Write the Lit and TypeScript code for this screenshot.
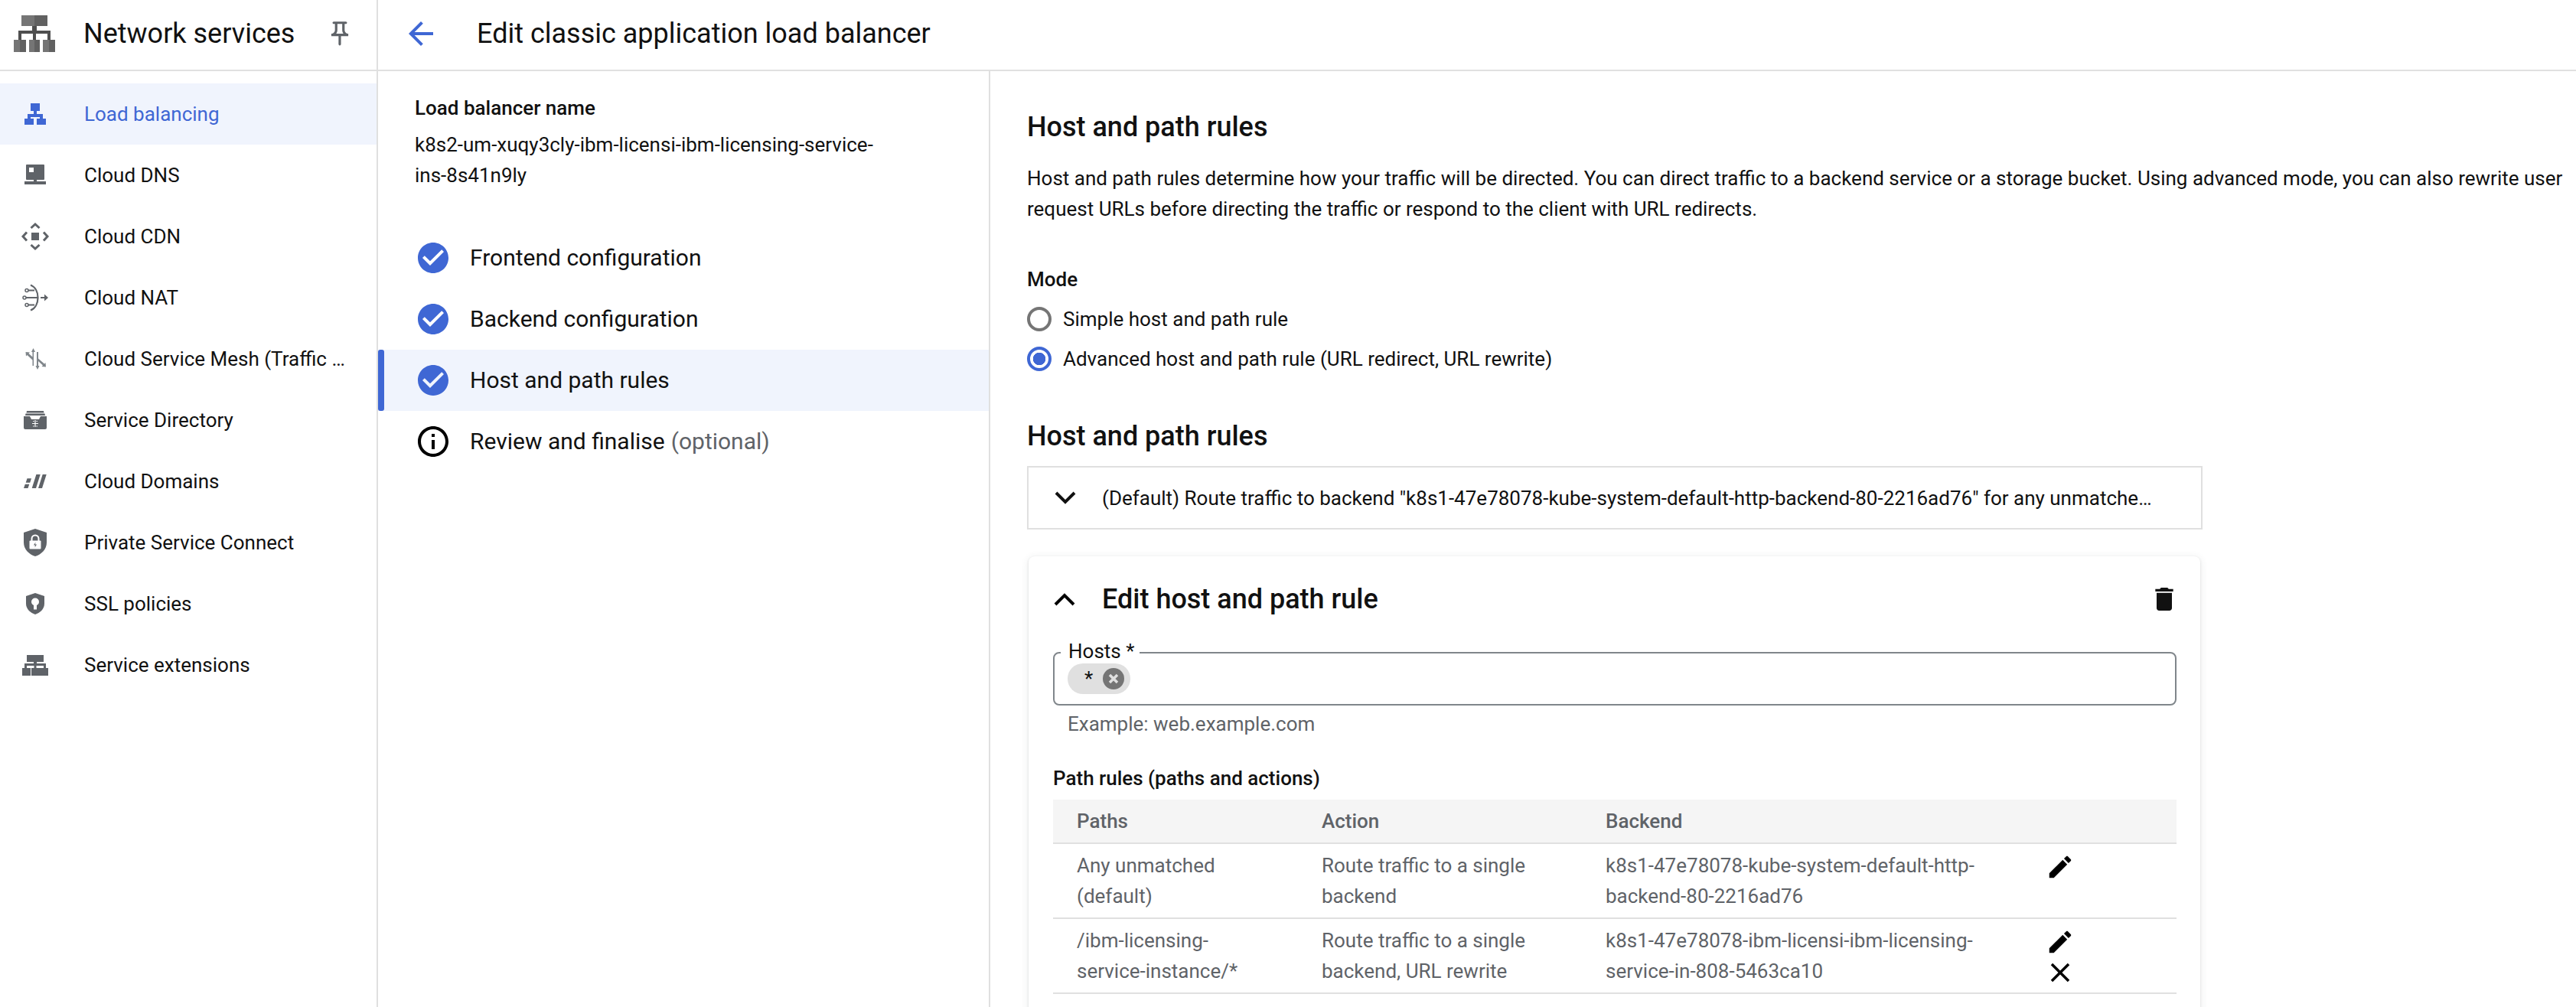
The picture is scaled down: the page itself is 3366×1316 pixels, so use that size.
import { LitElement, html, css, svg } from "lit";
import { customElement } from "lit/decorators.js";

const navIcons = {
  lb: svg`<path d="M18 10h12v10h-4v4h8v6h4v8H26v-8h4v-2H18v2h4v8H10v-8h4v-6h8v-4h-4z"/>`,
  dns: svg`<path fill-rule="evenodd" d="M13 10h22a1 1 0 0 1 1 1v18a1 1 0 0 1-1 1H26v2h12v4H10v-4h12v-2h-9a1 1 0 0 1-1-1V11a1 1 0 0 1 1-1zm3 4v6h6v-6z"/>`,
  cdn: svg`<rect x="19" y="19" width="10" height="10"/><path d="M18.500 13 24 8l5.500 5M18.500 35 24 40l5.500-5M13 18.500 8 24l5 5.500M35 18.500 40 24l-5 5.500" fill="none" stroke="currentColor" stroke-width="3"/>`,
  nat: svg`<path d="M18 7.500c6 2.500 9.500 9 9.500 16.500s-3.500 14-9.500 16.500" fill="none" stroke="currentColor" stroke-width="2.200"/><path d="M15 14.500h8M12 24h15M15 33.500h8" stroke="currentColor" stroke-width="1.800"/><circle cx="13" cy="14.500" r="2" fill="none" stroke="currentColor" stroke-width="1.500"/><circle cx="10" cy="24" r="2" fill="none" stroke="currentColor" stroke-width="1.500"/><circle cx="13" cy="33.500" r="2" fill="none" stroke="currentColor" stroke-width="1.500"/><path d="M31 23h5v-3.500l5 4.500-5 4.500V25h-5z"/>`,
  mesh: svg`<g fill="#80868b"><path d="M20.500 15H19l2.500-5 2.500 5h-2v18h-1.500v-7.500L13.500 19l-1.500 1.500-.5-5.500 5.500.5-1.500 1.500 5 4.500z"/><path d="M26 33h-1.500l2.500 5 2.500-5h-1.500V27l6 5.500-1.500 1.500 5.500.5-.5-5.500-1.500 1.500-8-7V15H26z"/></g>`,
  dir: svg`<path d="M13 12h22l.5 2.500h-23zM11.500 15.500h25l.5 2.500H11zM9 19h8l2 4h10l2-4h8v15a2 2 0 0 1-2 2H11a2 2 0 0 1-2-2z"/><path d="M24 24v9M20 28.500h8M21 25.500h1.500M25.500 25.500H27M21 32h1.500M25.500 32H27" stroke="#fff" stroke-width="1.200" fill="none"/>`,
  domains: svg`<path d="M9 33h5.500l1.800-5.300h-5.500zM11.700 25.700h5.500l1.800-5.500h-5.500zM19.700 33H25l5.700-18h-5.300zM28 33h5l5.700-18h-5z"/>`,
  psc: svg`<path d="M24 6l15 5v13c0 9-7 15.500-15 18-8-2.500-15-9-15-18V11z"/><path d="M19.500 22v-3a4.500 4.500 0 0 1 9 0v3" fill="none" stroke="#fff" stroke-width="2"/><rect x="16.500" y="21.500" width="15" height="11" rx="1" fill="#fff"/><path d="M24.500 23.500l-2.500 4h2l-.5 3 2.500-4h-2z"/>`,
  ssl: svg`<path d="M24 10l12 4v10c0 7-6 12-12 14-6-2-12-7-12-14V14z"/><circle cx="24" cy="21.500" r="5" fill="#fff"/><rect x="22" y="23" width="4" height="8.500" fill="#fff"/>`,
  ext: svg`<path d="M13 11h22v9h-9v2h12v6h3v10H30V28h5v-3H25.500v3h4.500v10H19V28h3.500v-3H13v3h5v10H7V28h3v-6h12v-2h-9z"/>`,
};

const NAV: { label: string; icon: keyof typeof navIcons; active?: boolean }[] = [
  { label: "Load balancing", icon: "lb", active: true },
  { label: "Cloud DNS", icon: "dns" },
  { label: "Cloud CDN", icon: "cdn" },
  { label: "Cloud NAT", icon: "nat" },
  { label: "Cloud Service Mesh (Traffic Director)", icon: "mesh" },
  { label: "Service Directory", icon: "dir" },
  { label: "Cloud Domains", icon: "domains" },
  { label: "Private Service Connect", icon: "psc" },
  { label: "SSL policies", icon: "ssl" },
  { label: "Service extensions", icon: "ext" },
];

const CHECK = "M12 2C6.48 2 2 6.48 2 12s4.48 10 10 10 10-4.48 10-10S17.52 2 12 2zm-2 15l-5-5 1.41-1.410L10 14.170l7.590-7.590L19 8l-9 9z";
const INFO = "M11 7h2v2h-2zm0 4h2v6h-2zm1-9C6.480 2 2 6.480 2 12s4.480 10 10 10 10-4.480 10-10S17.520 2 12 2zm0 18c-4.410 0-8-3.590-8-8s3.590-8 8-8 8 3.590 8 8-3.590 8-8 8z";
const EDIT = "M3 17.250V21h3.750L17.810 9.940l-3.750-3.750L3 17.250zM20.710 7.040c.39-.39.39-1.020 0-1.410l-2.340-2.340c-.39-.39-1.020-.39-1.410 0l-1.830 1.830 3.750 3.750 1.830-1.830z";
const CLOSE = "M19 6.410L17.590 5 12 10.590 6.410 5 5 6.410 10.590 12 5 17.590 6.410 19 12 13.410 17.590 19 19 17.590 13.410 12z";

const STEPS = [
  { label: "Frontend configuration", done: true },
  { label: "Backend configuration", done: true },
  { label: "Host and path rules", done: true, active: true },
  { label: "Review and finalise", optional: true },
];

const RULES = [
  {
    paths: "Any unmatched (default)",
    action: "Route traffic to a single backend",
    backend: "k8s1-47e78078-kube-system-default-http-backend-80-2216ad76",
    removable: false,
  },
  {
    paths: "/ibm-licensing-service-instance/*",
    action: "Route traffic to a single backend, URL rewrite",
    backend: "k8s1-47e78078-ibm-licensi-ibm-licensing-service-in-808-5463ca10",
    removable: true,
  },
];

@customElement("app-root")
export class AppRoot extends LitElement {
  static styles = css`
    :host {
      display: block;
      height: 1316px;
      overflow: hidden;
      background: #fff;
      color: #111;
      font-family: Roboto, sans-serif;
      font-size: 26px;
      line-height: 40px;
    }
    svg {
      display: block;
      flex: none;
      fill: currentColor;
    }
    .shell {
      display: flex;
      height: 100%;
    }

    /* left nav */
    .nav {
      flex: none;
      width: 492px;
      border-right: 2px solid #e0e0e0;
    }
    .nav-head {
      box-sizing: border-box;
      display: flex;
      align-items: center;
      height: 93px;
      padding: 0 29px 4px 18px;
      border-bottom: 2px solid #e0e0e0;
    }
    .nav-head .name {
      margin-left: 37px;
      font-size: 36px;
      flex: 1;
    }
    .pin {
      color: #5f6368;
    }
    .nav-list {
      padding-top: 16px;
    }
    .nav-item {
      display: flex;
      align-items: center;
      height: 80px;
      padding: 0 36px 0 22px;
    }
    .nav-item svg {
      color: #5f6368;
    }
    .nav-item span {
      margin-left: 40px;
      white-space: nowrap;
      overflow: hidden;
      text-overflow: ellipsis;
    }
    .nav-item.active {
      background: #f0f4fd;
      color: #3f67d4;
    }
    .nav-item.active svg {
      color: #3f67d4;
    }

    /* page */
    .page {
      flex: 1;
      min-width: 0;
      display: flex;
      flex-direction: column;
    }
    .top {
      box-sizing: border-box;
      display: flex;
      align-items: center;
      flex: none;
      height: 93px;
      padding: 0 0 4px 32px;
      border-bottom: 2px solid #e0e0e0;
    }
    .top svg {
      color: #3f67d4;
    }
    .top h1 {
      margin: 0 0 0 49px;
      font-size: 36px;
      font-weight: 400;
    }
    .body {
      flex: 1;
      display: flex;
      min-height: 0;
    }

    /* stepper */
    .stepper {
      flex: none;
      width: 798px;
      border-right: 2px solid #e0e0e0;
      padding-top: 28px;
    }
    .lb-name {
      padding: 0 130px 0 48px;
    }
    .lb-name b {
      display: block;
      font-weight: 500;
      margin-bottom: 8px;
    }
    .steps {
      margin-top: 48px;
    }
    .step {
      position: relative;
      display: flex;
      align-items: center;
      height: 80px;
      padding-left: 48px;
      font-size: 30px;
    }
    .step svg {
      color: #3f67d4;
      margin-right: 24px;
    }
    .step.todo svg {
      color: #000;
    }
    .step.active {
      background: #f0f4fd;
    }
    .step.active::before {
      content: "";
      position: absolute;
      left: 0;
      top: 0;
      bottom: 0;
      width: 8px;
      border-radius: 3px;
      background: #3f67d4;
    }
    .optional {
      color: #5f6368;
      margin-left: 8px;
    }

    /* form */
    .form {
      flex: 1;
      min-width: 0;
      padding: 49px 0 0 48px;
    }
    h2 {
      margin: 0;
      font-size: 36px;
      line-height: 48px;
      font-weight: 500;
    }
    .desc {
      margin: 23px 0 0;
    }
    .mode {
      margin-top: 52px;
      font-weight: 500;
    }
    .radios {
      margin: 6px 0 51px;
    }
    .radio {
      display: flex;
      align-items: center;
      height: 52px;
    }
    .dot {
      box-sizing: border-box;
      width: 32px;
      height: 32px;
      margin-right: 15px;
      border: 4px solid #757575;
      border-radius: 50%;
      background: #fff;
    }
    .dot.on {
      border-color: #3f67d4;
      background: radial-gradient(circle, #3f67d4 0 8px, #fff 8.500px);
    }
    .collapsed {
      box-sizing: border-box;
      display: flex;
      align-items: center;
      width: 1536px;
      height: 83px;
      margin-top: 15px;
      padding: 0 61px 0 34px;
      border: 2px solid #e0e0e0;
    }
    .collapsed span {
      margin-left: 34px;
      white-space: nowrap;
      overflow: hidden;
      text-overflow: ellipsis;
    }
    .card {
      box-sizing: border-box;
      width: 1531px;
      margin: 35px 0 0 2px;
      padding: 32px 31px 200px 32px;
      border-radius: 8px;
      box-shadow: 0 1px 3px rgba(60, 64, 67, 0.16), 0 2px 10px 2px rgba(60, 64, 67, 0.07);
    }
    .card-head {
      display: flex;
      align-items: center;
      height: 48px;
      padding-left: 1px;
      margin-right: -4px;
    }
    .card-head h3 {
      flex: 1;
      margin: 0 0 0 35px;
      font-size: 36px;
      line-height: 48px;
      font-weight: 500;
    }
    .field {
      position: relative;
      box-sizing: border-box;
      height: 70px;
      margin-top: 45px;
      padding: 13px 17px 0;
      border: 2px solid #80868b;
      border-radius: 8px;
    }
    .field label {
      position: absolute;
      left: 8px;
      top: -19px;
      padding: 0 7px 0 10px;
      line-height: 32px;
      background: #fff;
    }
    .chip {
      display: inline-flex;
      align-items: center;
      box-sizing: border-box;
      width: 82px;
      height: 40px;
      padding-left: 22px;
      border-radius: 20px;
      background: #e0e0e0;
    }
    .chip svg {
      margin-left: 13px;
    }
    .hint {
      margin: 4px 0 0 19px;
      color: #5f6368;
    }
    .rules-title {
      margin-top: 31px;
      font-weight: 500;
    }
    table {
      width: 100%;
      margin-top: 8px;
      border-collapse: collapse;
      table-layout: fixed;
      color: #5f6368;
    }
    th {
      height: 56px;
      padding: 0 0 0 31px;
      background: #f5f5f5;
      text-align: left;
      font-weight: 500;
      border-bottom: 2px solid #e0e0e0;
    }
    td {
      padding: 8px 32px 8px 31px;
      vertical-align: top;
      border-bottom: 2px solid #e0e0e0;
    }
    td.backend {
      padding-right: 0;
    }
    td.acts {
      padding: 10px 0 0 30px;
      color: #000;
    }
    .act {
      display: flex;
      align-items: center;
      height: 40px;
    }
    .act .close {
      margin-left: -2px;
    }
  `;

  private renderLogo() {
    return html`<svg width="54" height="48" viewBox="0 0 54 48">
      <path fill="#757575" d="M10 0h17v14H10zM0 32h8v16H0zM20 32h7v16h-7zM38 32h8v16h-8z" />
      <path fill="#616161" d="M27 0h17v14H27zM8 32h8v16H8zM27 32h7v16h-7zM46 32h8v16h-8z" />
      <path fill="#4f4f4f" d="M24 14h6v6h18v12h-4v-8H29v8h-4v-8H10v8H6V20h18z" />
    </svg>`;
  }

  private renderRule(r: (typeof RULES)[number]) {
    return html`<tr>
      <td>${r.paths}</td>
      <td>${r.action}</td>
      <td class="backend">${r.backend}</td>
      <td class="acts">
        <div class="act">
          <svg width="38" height="38" viewBox="0 0 24 24"><path d=${EDIT} /></svg>
        </div>
        ${r.removable
          ? html`<div class="act">
              <svg class="close" width="42" height="42" viewBox="0 0 24 24"><path d=${CLOSE} /></svg>
            </div>`
          : ""}
      </td>
    </tr>`;
  }

  render() {
    return html`<div class="shell">
      <aside class="nav">
        <div class="nav-head">
          ${this.renderLogo()}
          <span class="name">Network services</span>
          <svg class="pin" width="38" height="38" viewBox="0 0 24 24">
            <path d="M14 4v5c0 1.120.37 2.160 1 3H9c.65-.86 1-1.900 1-3V4h4m3-2H7c-.55 0-1 .45-1 1s.45 1 1 1h1v5c0 1.660-1.340 3-3 3v2h5.970v7l1 1 1-1v-7H19v-2c-1.660 0-3-1.340-3-3V4h1c.55 0 1-.45 1-1s-.45-1-1-1z" />
          </svg>
        </div>
        <div class="nav-list">
          ${NAV.map(
            (n) => html`<div class="nav-item ${n.active ? "active" : ""}">
              <svg width="48" height="48" viewBox="0 0 48 48">${navIcons[n.icon]}</svg>
              <span>${n.label}</span>
            </div>`
          )}
        </div>
      </aside>

      <div class="page">
        <div class="top">
          <svg width="48" height="48" viewBox="0 0 24 24">
            <path d="M20 11H7.830l5.590-5.590L12 4l-8 8 8 8 1.410-1.410L7.830 13H20v-2z" />
          </svg>
          <h1>Edit classic application load balancer</h1>
        </div>
        <div class="body">
          <section class="stepper">
            <div class="lb-name">
              <b>Load balancer name</b>
              k8s2-um-xuqy3cly-ibm-licensi-ibm-licensing-service-ins-8s41n9ly
            </div>
            <div class="steps">
              ${STEPS.map(
                (s) => html`<div class="step ${s.active ? "active" : ""} ${s.done ? "" : "todo"}">
                  <svg width="48" height="48" viewBox="0 0 24 24"><path d=${s.done ? CHECK : INFO} /></svg>
                  ${s.label}${s.optional ? html`<span class="optional">(optional)</span>` : ""}
                </div>`
              )}
            </div>
          </section>

          <section class="form">
            <h2>Host and path rules</h2>
            <p class="desc">
              Host and path rules determine how your traffic will be directed. You can direct traffic to a backend service or a storage bucket. Using advanced mode, you can also rewrite user request URLs before directing the traffic or respond to the client with URL redirects.
            </p>
            <div class="mode">Mode</div>
            <div class="radios">
              <div class="radio"><span class="dot"></span>Simple host and path rule</div>
              <div class="radio"><span class="dot on"></span>Advanced host and path rule (URL redirect, URL rewrite)</div>
            </div>
            <h2>Host and path rules</h2>
            <div class="collapsed">
              <svg width="28" height="18" viewBox="0 0 28 18">
                <path d="M2 2l12 12L26 2" fill="none" stroke="#111" stroke-width="4" />
              </svg>
              <span>(Default) Route traffic to backend "k8s1-47e78078-kube-system-default-http-backend-80-2216ad76" for any unmatched hosts and paths</span>
            </div>

            <div class="card">
              <div class="card-head">
                <svg width="28" height="18" viewBox="0 0 28 18">
                  <path d="M2 16L14 4l12 12" fill="none" stroke="#000" stroke-width="4" />
                </svg>
                <h3>Edit host and path rule</h3>
                <svg width="40" height="40" viewBox="0 0 24 24">
                  <path d="M6 19c0 1.100.9 2 2 2h8c1.100 0 2-.9 2-2V7H6v12zM19 4h-3.500l-1-1h-5l-1 1H5v2h14V4z" />
                </svg>
              </div>
              <div class="field">
                <label>Hosts *</label>
                <span class="chip">*
                  <svg width="28" height="28" viewBox="0 0 28 28">
                    <circle cx="14" cy="14" r="14" fill="#757575" />
                    <path d="M9 9l10 10M19 9L9 19" stroke="#e0e0e0" stroke-width="3.500" />
                  </svg>
                </span>
              </div>
              <div class="hint">Example: web.example.com</div>
              <div class="rules-title">Path rules (paths and actions)</div>
              <table>
                <colgroup>
                  <col width="320" /><col width="371" /><col width="576" /><col />
                </colgroup>
                <thead>
                  <tr><th>Paths</th><th>Action</th><th>Backend</th><th></th></tr>
                </thead>
                <tbody>${RULES.map((r) => this.renderRule(r))}</tbody>
              </table>
            </div>
          </section>
        </div>
      </div>
    </div>`;
  }
}
